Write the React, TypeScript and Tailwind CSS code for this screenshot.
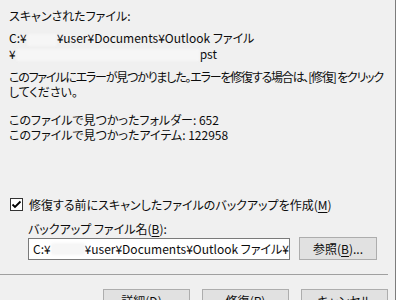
import React from 'react';

// Blurred-out part of a path
function Redacted({ width }: { width: string }) {
  return <span className={`inline-block ${width} h-[12px] align-middle bg-[#f6f6f6] rounded-[2px] blur-[1px]`}></span>;
}

function Mnemonic({ k }: { k: string }) {
  return (
    <>
      (<span className="underline underline-offset-2">{k}</span>)
    </>
  );
}

export default function App() {
  return (
    <div className="w-[396px] h-[300px] overflow-hidden bg-[#f0f0f0] border-r border-[#7c7c7c] text-[12px] leading-[15px] text-[#0c0c0c] font-['Noto_Sans_CJK_JP',sans-serif] [font-feature-settings:'palt']">
      {/* Scan result */}
      <div className="pl-[9px] pt-[8px]">
        <p>スキャンされたファイル:</p>
        <p className="mt-[7px] whitespace-nowrap">
          C:¥<Redacted width="w-[30px]" />¥user¥Documents¥Outlook ファイル
        </p>
        <p className="whitespace-nowrap">
          ¥<Redacted width="w-[184px]" />pst
        </p>
        <p className="mt-[8px] whitespace-nowrap">
          <span className="tracking-[-1.2px]">このファイルにエラーが見つかりました。エラーを修復する場合は、[修復] をクリック</span>
          <br />
          してください。
        </p>
        <p className="mt-[13px]">このファイルで見つかったフォルダー: 652</p>
        <p>このファイルで見つかったアイテム: 122958</p>
      </div>

      {/* Backup option */}
      <label className="mt-[55px] pl-[10px] h-[15px] flex items-center gap-[6px]">
        <span className="w-[13px] h-[13px] bg-white border border-[#333] flex items-center justify-center">
          <svg width="11" height="11" viewBox="0 0 11 11">
            <polyline points="1.5,5.5 4,8 9.5,2.5" fill="none" stroke="#000" strokeWidth="1.8" />
          </svg>
        </span>
        <span>修復する前にスキャンしたファイルのバックアップを作成<Mnemonic k="M" /></span>
      </label>

      <div className="pl-[28px] mt-[9px]">
        <p>バックアップ ファイル名<Mnemonic k="B" />:</p>
        <div className="mt-[1px] flex items-center gap-[9px]">
          <div className="w-[262px] h-[22px] bg-white border border-[#7a7a7a] pl-[4px] flex items-center whitespace-nowrap overflow-hidden">
            C:¥<Redacted width="w-[34px]" />¥user¥Documents¥Outlook ファイル¥
          </div>
          <button className="w-[78px] h-[23px] bg-[#e1e1e1] border border-[#adadad] flex items-center justify-center">
            参照<Mnemonic k="B" />...
          </button>
        </div>
      </div>

      {/* Separator */}
      <div className="mt-[14px] w-[388px] border-t border-[#a0a0a0]"></div>

      {/* Dialog buttons */}
      <div className="mt-[14px] pl-[103px] flex gap-[12px]">
        <button className="w-[87px] h-[23px] bg-[#e1e1e1] border border-[#adadad] flex items-center justify-center">
          詳細<Mnemonic k="D" />...
        </button>
        <button className="w-[87px] h-[23px] bg-[#e1e1e1] border border-[#adadad] flex items-center justify-center">
          修復<Mnemonic k="R" />
        </button>
        <button className="w-[87px] h-[23px] bg-[#e1e1e1] border border-[#adadad] flex items-center justify-center">
          キャンセル
        </button>
      </div>
    </div>
  );
}
